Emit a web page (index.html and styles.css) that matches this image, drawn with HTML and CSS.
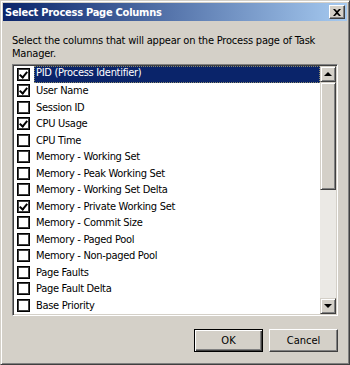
FILE: index.html
```html
<!DOCTYPE html>
<html lang="en">
<head>
  <meta charset="UTF-8">
  <title>Select Process Page Columns</title>
  <link rel="stylesheet" href="styles.css">
</head>
<body>
  <div class="window">
    <div class="titlebar">
      <span class="title">Select Process Page Columns</span>
      <button class="title-close">
        <svg width="8" height="7" viewBox="0 0 8 7"><path d="M0 0h2l2 2 2-2h2L5 3.5 8 7H6L4 5 2 7H0l3-3.5z" fill="#000"/></svg>
      </button>
    </div>
    <p class="desc">Select the columns that will appear on the Process page of Task Manager.</p>
    <div class="list">
      <ul class="list-items">
        <li class="row"><span class="check check_on"></span><span class="label label_selected">PID (Process Identifier)</span></li>
        <li class="row"><span class="check check_on"></span><span class="label">User Name</span></li>
        <li class="row"><span class="check"></span><span class="label">Session ID</span></li>
        <li class="row"><span class="check check_on"></span><span class="label">CPU Usage</span></li>
        <li class="row"><span class="check"></span><span class="label">CPU Time</span></li>
        <li class="row"><span class="check"></span><span class="label">Memory - Working Set</span></li>
        <li class="row"><span class="check"></span><span class="label">Memory - Peak Working Set</span></li>
        <li class="row"><span class="check"></span><span class="label">Memory - Working Set Delta</span></li>
        <li class="row"><span class="check check_on"></span><span class="label">Memory - Private Working Set</span></li>
        <li class="row"><span class="check"></span><span class="label">Memory - Commit Size</span></li>
        <li class="row"><span class="check"></span><span class="label">Memory - Paged Pool</span></li>
        <li class="row"><span class="check"></span><span class="label">Memory - Non-paged Pool</span></li>
        <li class="row"><span class="check"></span><span class="label">Page Faults</span></li>
        <li class="row"><span class="check"></span><span class="label">Page Fault Delta</span></li>
        <li class="row"><span class="check"></span><span class="label">Base Priority</span></li>
      </ul>
      <div class="scrollbar">
        <div class="scroll-btn"><span class="arrow arrow_up"></span></div>
        <div class="scroll-thumb"></div>
        <div class="scroll-track"></div>
        <div class="scroll-btn"><span class="arrow arrow_down"></span></div>
      </div>
    </div>
    <div class="buttons">
      <button class="btn btn_default">OK</button>
      <button class="btn">Cancel</button>
    </div>
  </div>
</body>
</html>
```

FILE: styles.css
```css
* {
  margin: 0;
  padding: 0;
  box-sizing: border-box;
}

body {
  width: 350px;
  height: 365px;
  background: #d4d0c8;
  font-family: "DejaVu Sans Condensed", "Liberation Sans", sans-serif;
  font-size: 11px;
  letter-spacing: -0.2px;
  color: #000;
}

.window {
  width: 350px;
  height: 365px;
  background: #d4d0c8;
  border: 1px solid;
  border-color: #d4d0c8 #404040 #404040 #d4d0c8;
  box-shadow: inset 1px 1px 0 #fff, inset -1px -1px 0 #808080;
  padding: 2px;
}

.titlebar {
  height: 18px;
  background: linear-gradient(to right, #0a246a, #a6caf0);
  display: flex;
  align-items: center;
  justify-content: space-between;
  padding: 0 2px 0 2px;
}

.title {
  color: #fff;
  font-weight: bold;
  font-size: 11px;
  letter-spacing: -0.25px;
}

.title-close {
  width: 16px;
  height: 14px;
  background: #d4d0c8;
  border: 1px solid;
  border-color: #fff #404040 #404040 #fff;
  box-shadow: inset -1px -1px 0 #808080;
  display: flex;
  align-items: center;
  justify-content: center;
}

.desc {
  margin: 13px 9px 0 9px;
  line-height: 13px;
}

/* sunken list box */
.list {
  margin: 4px 9px 0 9px;
  height: 252px;
  background: #fff;
  border: 1px solid;
  border-color: #808080 #fff #fff #808080;
  box-shadow: inset 1px 1px 0 #404040, inset -1px -1px 0 #d4d0c8;
  padding: 1px;
  display: flex;
}

.list-items {
  flex: 1;
  list-style: none;
  overflow: hidden;
}

.row {
  height: 16.5px;
  display: flex;
  align-items: center;
  padding-left: 3px;
}

.check {
  width: 13px;
  height: 13px;
  border: 1px solid #000;
  box-shadow: inset 1px 1px 0 #404040, inset -1px -1px 0 #404040;
  background: #fff;
  flex-shrink: 0;
  position: relative;
}

.check_on:after {
  content: '';
  position: absolute;
  left: 3px;
  top: 1px;
  width: 3px;
  height: 6px;
  border: solid #000;
  border-width: 0 2px 2px 0;
  transform: rotate(40deg);
}

.label {
  margin-left: 4px;
  padding: 0 2px;
  line-height: 15px;
  letter-spacing: -0.3px;
  white-space: nowrap;
}

.label_selected {
  flex: 1;
  align-self: stretch;
  line-height: 14px;
  background: #0a246a;
  color: #fff;
  outline: 1px dotted #8c8a6a;
  outline-offset: -1px;
}

.scrollbar {
  width: 16px;
  display: flex;
  flex-direction: column;
}

.scroll-btn,
.scroll-thumb {
  background: #d4d0c8;
  border: 1px solid;
  border-color: #d4d0c8 #404040 #404040 #d4d0c8;
  box-shadow: inset 1px 1px 0 #fff, inset -1px -1px 0 #808080;
}

.scroll-btn {
  height: 16px;
  display: flex;
  align-items: center;
  justify-content: center;
}

.scroll-thumb {
  height: 108px;
}

.scroll-track {
  flex: 1;
  background: #ebe9e5;
}

.arrow {
  width: 0;
  height: 0;
  border-left: 4px solid transparent;
  border-right: 4px solid transparent;
}

.arrow_up {
  border-bottom: 4px solid #000;
}

.arrow_down {
  border-top: 4px solid #000;
}

.buttons {
  display: flex;
  justify-content: flex-end;
  gap: 6px;
  margin: 13px 9px 0 0;
}

.btn {
  width: 69px;
  height: 23px;
  font-family: inherit;
  font-size: 11px;
  background: #d4d0c8;
  border: 1px solid;
  border-color: #fff #404040 #404040 #fff;
  box-shadow: inset -1px -1px 0 #808080;
}

.btn_default {
  border: 1px solid #000;
  box-shadow: inset 1px 1px 0 #fff, inset -1px -1px 0 #404040, inset -2px -2px 0 #808080;
}
```
